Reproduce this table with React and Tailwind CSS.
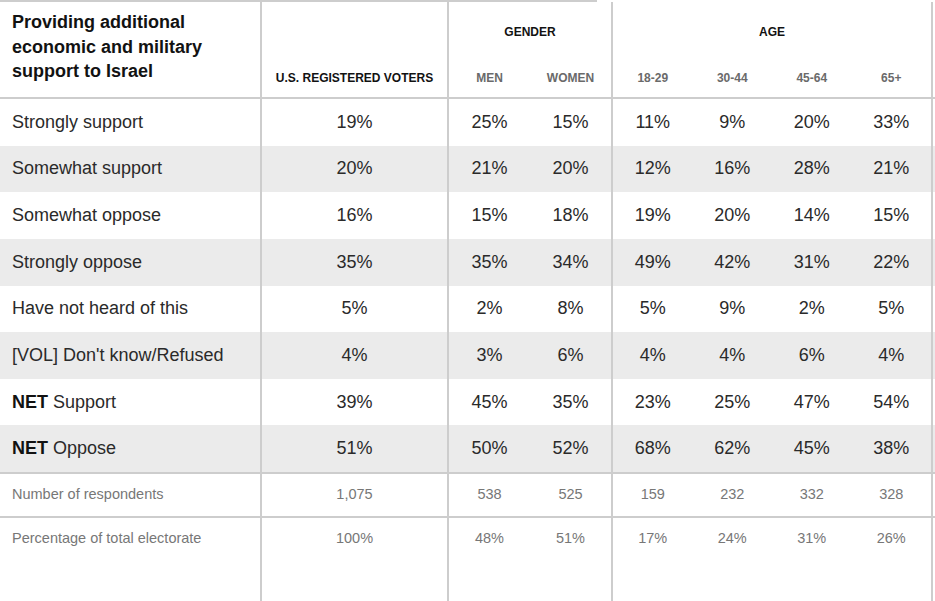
import React from 'react';

const rows = [
  { label: 'Strongly support', us: '19%', g: ['25%', '15%'], a: ['11%', '9%', '20%', '33%'] },
  { label: 'Somewhat support', us: '20%', g: ['21%', '20%'], a: ['12%', '16%', '28%', '21%'] },
  { label: 'Somewhat oppose', us: '16%', g: ['15%', '18%'], a: ['19%', '20%', '14%', '15%'] },
  { label: 'Strongly oppose', us: '35%', g: ['35%', '34%'], a: ['49%', '42%', '31%', '22%'] },
  { label: 'Have not heard of this', us: '5%', g: ['2%', '8%'], a: ['5%', '9%', '2%', '5%'] },
  { label: "[VOL] Don't know/Refused", us: '4%', g: ['3%', '6%'], a: ['4%', '4%', '6%', '4%'] },
  { label: 'Support', net: true, us: '39%', g: ['45%', '35%'], a: ['23%', '25%', '47%', '54%'] },
  { label: 'Oppose', net: true, us: '51%', g: ['50%', '52%'], a: ['68%', '62%', '45%', '38%'] },
];

const line = 'border-[#cdcdcd]';

const Cells = ({ us, g, a, cellClass }) => (
  <>
    <div className={`w-[187px] border-l-2 ${line} flex justify-center ${cellClass}`}>{us}</div>
    <div className={`w-[164px] border-l-2 ${line} flex`}>
      {g.map((v, i) => (
        <div key={i} className={`flex-1 flex justify-center ${cellClass}`}>{v}</div>
      ))}
    </div>
    <div className={`w-[322px] border-l-2 border-r-2 ${line} flex`}>
      {a.map((v, i) => (
        <div key={i} className={`flex-1 flex justify-center ${cellClass}`}>{v}</div>
      ))}
    </div>
  </>
);

const App = () => {
  return (
    <div
      className="w-[935px] h-[601px] bg-white overflow-hidden flex flex-col text-[#2a2a2a]"
      style={{ fontFamily: '"Liberation Sans", Arial, sans-serif' }}
    >
      <div className="h-[2px] w-[597px] bg-[#cdcdcd] shrink-0" />

      {/* header */}
      <div className={`flex h-[97px] shrink-0 border-b-2 ${line}`}>
        <div className="w-[260px] pl-3 pt-[8px] text-[18px] font-bold leading-[24.5px] text-[#121212]">
          Providing additional
          <br />
          economic and military
          <br />
          support to Israel
        </div>
        <div className={`w-[187px] border-l-2 ${line} flex items-end justify-center pb-[10px] text-[12px] font-bold text-[#121212]`}>
          U.S. REGISTERED VOTERS
        </div>
        <div className={`w-[164px] border-l-2 ${line} flex flex-col`}>
          <div className="pt-[21px] text-center text-[12px] font-bold text-[#121212]">GENDER</div>
          <div className="mt-auto pb-[10px] flex text-[12px] font-bold text-[#6a6a6a]">
            <div className="flex-1 text-center">MEN</div>
            <div className="flex-1 text-center">WOMEN</div>
          </div>
        </div>
        <div className={`w-[322px] border-l-2 border-r-2 ${line} flex flex-col`}>
          <div className="pt-[21px] text-center text-[12px] font-bold text-[#121212]">AGE</div>
          <div className="mt-auto pb-[10px] flex text-[12px] font-bold text-[#6a6a6a]">
            <div className="flex-1 text-center">18-29</div>
            <div className="flex-1 text-center">30-44</div>
            <div className="flex-1 text-center">45-64</div>
            <div className="flex-1 text-center">65+</div>
          </div>
        </div>
      </div>

      {/* body */}
      {rows.map((r, i) => (
        <div key={i} className={`flex h-[46.625px] shrink-0 text-[18px] ${i % 2 === 1 ? 'bg-[#ebebeb]' : 'bg-white'}`}>
          <div className="w-[260px] pl-3 flex items-center">
            {r.net && <span className="font-bold text-[#121212] mr-[5px]">NET</span>}
            {r.label}
          </div>
          <Cells us={r.us} g={r.g} a={r.a} cellClass="items-center" />
        </div>
      ))}

      {/* footer */}
      <div className={`flex h-[44px] shrink-0 border-t-2 ${line} text-[14.5px] text-[#777]`}>
        <div className="w-[260px] pl-3 flex items-center">Number of respondents</div>
        <Cells us="1,075" g={['538', '525']} a={['159', '232', '332', '328']} cellClass="items-center" />
      </div>
      <div className={`flex flex-1 border-t-2 ${line} text-[14.5px] text-[#777]`}>
        <div className="w-[260px] pl-3 pt-[10px]">Percentage of total electorate</div>
        <Cells us="100%" g={['48%', '51%']} a={['17%', '24%', '31%', '26%']} cellClass="items-start pt-[10px]" />
      </div>
    </div>
  );
};

export default App;
